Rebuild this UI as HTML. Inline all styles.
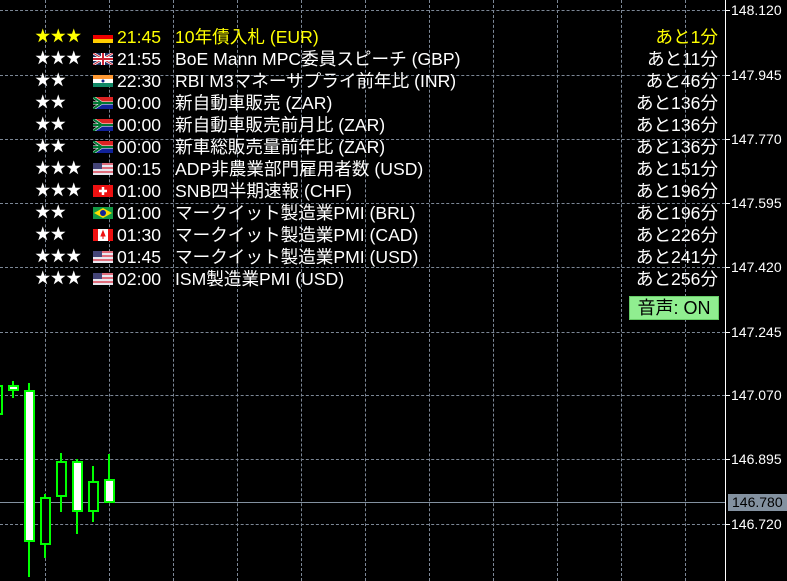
<!DOCTYPE html><html><head><meta charset="utf-8"><style>
body{margin:0;width:787px;height:581px;background:#000;overflow:hidden;position:relative;font-family:"Liberation Sans","Noto Sans CJK JP",sans-serif;}
.h{position:absolute;left:0;width:725px;height:0;border-top:1px dashed #7c8796;}
.v{position:absolute;top:0;height:581px;width:0;border-left:1px dashed #7c8796;}
.lab{position:absolute;left:731px;color:#fff;font-size:14px;line-height:16px;}
.tk{position:absolute;left:725px;width:5px;height:1px;background:#fff;}
.r{position:absolute;left:0;width:720px;height:22px;line-height:22px;font-size:17.6px;color:#fff;white-space:nowrap;}
.r .s{position:absolute;left:35px;font-size:15.5px;letter-spacing:0px}
.r svg{position:absolute;left:93px;top:5px}
.r .t{position:absolute;left:117px}
.r .n{position:absolute;left:175px}
.r .a{position:absolute;right:2px}
.y{color:#ffff00}
.c{position:absolute;border:2px solid #00ff00;box-sizing:border-box}
.w{position:absolute;width:2px;background:#00ff00}
</style></head><body>
<div class="h" style="top:10px"></div><div class="h" style="top:75px"></div><div class="h" style="top:139px"></div><div class="h" style="top:203px"></div><div class="h" style="top:267px"></div><div class="h" style="top:332px"></div><div class="h" style="top:395px"></div><div class="h" style="top:459px"></div><div class="h" style="top:524px"></div>
<div class="v" style="left:45px"></div><div class="v" style="left:109px"></div><div class="v" style="left:173px"></div><div class="v" style="left:237px"></div><div class="v" style="left:301px"></div><div class="v" style="left:365px"></div><div class="v" style="left:429px"></div><div class="v" style="left:493px"></div><div class="v" style="left:557px"></div><div class="v" style="left:621px"></div><div class="v" style="left:685px"></div>
<div style="position:absolute;left:725px;top:0;width:1px;height:581px;background:#fff"></div>
<div style="position:absolute;left:0;top:502px;width:725px;height:1px;background:#8391a0"></div>
<div class="tk" style="top:10px"></div><div class="lab" style="top:2px">148.120</div>
<div class="tk" style="top:75px"></div><div class="lab" style="top:67px">147.945</div>
<div class="tk" style="top:139px"></div><div class="lab" style="top:131px">147.770</div>
<div class="tk" style="top:203px"></div><div class="lab" style="top:195px">147.595</div>
<div class="tk" style="top:267px"></div><div class="lab" style="top:259px">147.420</div>
<div class="tk" style="top:332px"></div><div class="lab" style="top:324px">147.245</div>
<div class="tk" style="top:395px"></div><div class="lab" style="top:387px">147.070</div>
<div class="tk" style="top:459px"></div><div class="lab" style="top:451px">146.895</div>
<div class="tk" style="top:524px"></div><div class="lab" style="top:516px">146.720</div>
<div style="position:absolute;left:728px;top:494px;width:59px;height:17px;background:#8391a0;color:#000;font-size:14px;line-height:17px;padding-left:4px;box-sizing:border-box">146.780</div>

<div class="w" style="left:12px;top:381px;height:17px"></div><div class="c" style="left:8px;top:385px;width:11px;height:6px;background:#fff"></div>
<div class="c" style="left:-8px;top:385px;width:11px;height:30px"></div>
<div class="w" style="left:28px;top:383px;height:194px"></div><div class="c" style="left:24px;top:390px;width:11px;height:152px;background:#fff"></div>
<div class="w" style="left:44px;top:494px;height:64px"></div><div class="c" style="left:40px;top:497px;width:11px;height:48px;background:#000"></div>
<div class="w" style="left:60px;top:453px;height:59px"></div><div class="c" style="left:56px;top:461px;width:11px;height:36px;background:#000"></div>
<div class="w" style="left:76px;top:459px;height:75px"></div><div class="c" style="left:72px;top:461px;width:11px;height:51px;background:#fff"></div>
<div class="w" style="left:92px;top:466px;height:56px"></div><div class="c" style="left:88px;top:481px;width:11px;height:31px;background:#000"></div>
<div class="w" style="left:108px;top:454px;height:30px"></div><div class="c" style="left:104px;top:479px;width:11px;height:24px;background:#fff"></div>

<div class="r y" style="top:26px"><span class="s">★★★</span><svg width="20" height="12"><rect width="20" height="4" fill="#000"/><rect y="4" width="20" height="4" fill="#e00"/><rect y="8" width="20" height="4" fill="#fc0"/></svg><span class="t">21:45</span><span class="n">10年債入札 (EUR)</span><span class="a">あと1分</span></div>
<div class="r" style="top:48px"><span class="s">★★★</span><svg width="20" height="12"><rect width="20" height="12" fill="#236"/><path d="M0 0L20 12M20 0L0 12" stroke="#fff" stroke-width="2.5"/><path d="M0 0L20 12M20 0L0 12" stroke="#c23" stroke-width="1"/><path d="M10 0V12M0 6H20" stroke="#fff" stroke-width="4"/><path d="M10 0V12M0 6H20" stroke="#c23" stroke-width="2"/></svg><span class="t">21:55</span><span class="n">BoE Mann MPC委員スピーチ (GBP)</span><span class="a">あと11分</span></div>
<div class="r" style="top:70px"><span class="s">★★</span><svg width="20" height="12"><rect width="20" height="4" fill="#f93"/><rect y="4" width="20" height="4" fill="#fff"/><rect y="8" width="20" height="4" fill="#186"/><circle cx="10" cy="6" r="1.5" fill="#128"/></svg><span class="t">22:30</span><span class="n">RBI M3マネーサプライ前年比 (INR)</span><span class="a">あと46分</span></div>
<div class="r" style="top:92px"><span class="s">★★</span><svg width="20" height="12"><rect width="20" height="6" fill="#d22"/><rect y="6" width="20" height="6" fill="#129"/><path d="M0 0L9 6L0 12" fill="#000" stroke="#fb1" stroke-width="1"/><path d="M0 6H20M0 0L9 6L0 12" fill="none" stroke="#fff" stroke-width="3"/><path d="M0 6H20M0 0L9 6L0 12" fill="none" stroke="#073" stroke-width="2"/></svg><span class="t">00:00</span><span class="n">新自動車販売 (ZAR)</span><span class="a">あと136分</span></div>
<div class="r" style="top:114px"><span class="s">★★</span><svg width="20" height="12"><rect width="20" height="6" fill="#d22"/><rect y="6" width="20" height="6" fill="#129"/><path d="M0 0L9 6L0 12" fill="#000" stroke="#fb1" stroke-width="1"/><path d="M0 6H20M0 0L9 6L0 12" fill="none" stroke="#fff" stroke-width="3"/><path d="M0 6H20M0 0L9 6L0 12" fill="none" stroke="#073" stroke-width="2"/></svg><span class="t">00:00</span><span class="n">新自動車販売前月比 (ZAR)</span><span class="a">あと136分</span></div>
<div class="r" style="top:136px"><span class="s">★★</span><svg width="20" height="12"><rect width="20" height="6" fill="#d22"/><rect y="6" width="20" height="6" fill="#129"/><path d="M0 0L9 6L0 12" fill="#000" stroke="#fb1" stroke-width="1"/><path d="M0 6H20M0 0L9 6L0 12" fill="none" stroke="#fff" stroke-width="3"/><path d="M0 6H20M0 0L9 6L0 12" fill="none" stroke="#073" stroke-width="2"/></svg><span class="t">00:00</span><span class="n">新車総販売量前年比 (ZAR)</span><span class="a">あと136分</span></div>
<div class="r" style="top:158px"><span class="s">★★★</span><svg width="20" height="12"><rect width="20" height="12" fill="#e8e8f0"/><path d="M0 1H20M0 5H20M0 9H20" stroke="#d45" stroke-width="1.5"/><rect width="9" height="6" fill="#447"/></svg><span class="t">00:15</span><span class="n">ADP非農業部門雇用者数 (USD)</span><span class="a">あと151分</span></div>
<div class="r" style="top:180px"><span class="s">★★★</span><svg width="20" height="12"><rect width="20" height="12" fill="#e11"/><path d="M10 2V10M6 6H14" stroke="#fff" stroke-width="2.5"/></svg><span class="t">01:00</span><span class="n">SNB四半期速報 (CHF)</span><span class="a">あと196分</span></div>
<div class="r" style="top:202px"><span class="s">★★</span><svg width="20" height="12"><rect width="20" height="12" fill="#194"/><path d="M10 1L19 6L10 11L1 6Z" fill="#fd0"/><circle cx="10" cy="6" r="3" fill="#129"/></svg><span class="t">01:00</span><span class="n">マークイット製造業PMI (BRL)</span><span class="a">あと196分</span></div>
<div class="r" style="top:224px"><span class="s">★★</span><svg width="20" height="12"><rect width="20" height="12" fill="#fff"/><rect width="5" height="12" fill="#e11"/><rect x="15" width="5" height="12" fill="#e11"/><path d="M10 2L12 7H8Z M10 7V10" fill="#e11" stroke="#e11"/></svg><span class="t">01:30</span><span class="n">マークイット製造業PMI (CAD)</span><span class="a">あと226分</span></div>
<div class="r" style="top:246px"><span class="s">★★★</span><svg width="20" height="12"><rect width="20" height="12" fill="#e8e8f0"/><path d="M0 1H20M0 5H20M0 9H20" stroke="#d45" stroke-width="1.5"/><rect width="9" height="6" fill="#447"/></svg><span class="t">01:45</span><span class="n">マークイット製造業PMI (USD)</span><span class="a">あと241分</span></div>
<div class="r" style="top:268px"><span class="s">★★★</span><svg width="20" height="12"><rect width="20" height="12" fill="#e8e8f0"/><path d="M0 1H20M0 5H20M0 9H20" stroke="#d45" stroke-width="1.5"/><rect width="9" height="6" fill="#447"/></svg><span class="t">02:00</span><span class="n">ISM製造業PMI (USD)</span><span class="a">あと256分</span></div>
<div style="position:absolute;left:629px;top:296px;width:90px;height:24px;background:#90ee90;border:1px solid #6c6;box-sizing:border-box;color:#000;font-size:18px;line-height:22px;text-align:center">音声: ON</div>
</body></html>
